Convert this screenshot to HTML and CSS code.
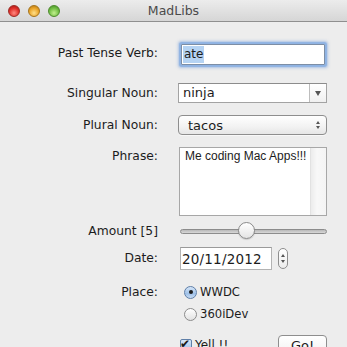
FILE: index.html
```html
<!DOCTYPE html>
<html lang="en">
<head>
    <meta charset="UTF-8">
    <title>MadLibs</title>
    <link rel="stylesheet" href="styles.css">
</head>
<body>
    <div class="window">
        <div class="titlebar">
            <div class="lights">
                <span class="light red"></span>
                <span class="light yellow"></span>
                <span class="light green"></span>
            </div>
            <div class="title">MadLibs</div>
            <div></div>
        </div>

        <div class="form">
            <div class="row row-verb">
                <div class="label">Past Tense Verb:</div>
                <div class="field focused"><span class="selected">ate</span></div>
            </div>

            <div class="row row-singular">
                <div class="label">Singular Noun:</div>
                <div class="combo">
                    <div class="combo-text">ninja</div>
                    <div class="combo-btn"><span class="tri-down"></span></div>
                </div>
            </div>

            <div class="row row-plural">
                <div class="label">Plural Noun:</div>
                <div class="popup">
                    <span>tacos</span>
                    <span class="updown">
                        <span class="tri-up small"></span>
                        <span class="tri-down small"></span>
                    </span>
                </div>
            </div>

            <div class="row row-phrase">
                <div class="label top">Phrase:</div>
                <div class="textview">
                    <div class="textview-text">Me coding Mac Apps!!!</div>
                    <div class="scroll-gutter"></div>
                </div>
            </div>

            <div class="row row-amount">
                <div class="label">Amount [5]</div>
                <div class="slider">
                    <div class="track"></div>
                    <div class="knob"></div>
                </div>
            </div>

            <div class="row row-date">
                <div class="label">Date:</div>
                <div class="date-group">
                    <div class="date-field">20/11/2012</div>
                    <div class="stepper">
                        <span class="tri-up small"></span>
                        <span class="tri-down small"></span>
                    </div>
                </div>
            </div>

            <div class="row row-place">
                <div class="label top">Place:</div>
                <div class="radios">
                    <div class="radio-item"><span class="radio checked"></span>WWDC</div>
                    <div class="radio-item"><span class="radio"></span>360iDev</div>
                </div>
            </div>

            <div class="row row-yell">
                <div></div>
                <div class="bottom-group">
                    <div class="check-item"><span class="checkbox">&#10004;</span>Yell !!</div>
                    <div class="button">Go!</div>
                </div>
            </div>
        </div>
    </div>
</body>
</html>
```

FILE: styles.css
```css
body {
    margin: 0;
    width: 347px;
    height: 347px;
    overflow: hidden;
    background-color: #ededed;
    font-family: 'DejaVu Sans', sans-serif;
    color: #1c1c1c;
}

.window {
    height: 347px;
    overflow: hidden;
}

/* title bar */
.titlebar {
    height: 21px;
    display: grid;
    grid-template-columns: 1fr auto 1fr;
    align-items: center;
    background: linear-gradient(#ececec, #d6d6d6);
    border-bottom: 1px solid #8f8f8f;
}

.lights {
    display: flex;
    gap: 8px;
    padding-left: 8px;
}

.light {
    width: 12px;
    height: 12px;
    border-radius: 50%;
    box-sizing: border-box;
}

.red {
    background: radial-gradient(circle at 50% 70%, #ff8a80, #e0312b 55%, #a01310);
    border: 1px solid #9c2a24;
}

.yellow {
    background: radial-gradient(circle at 50% 70%, #ffe08a, #eaa52a 55%, #b0700d);
    border: 1px solid #a5741c;
}

.green {
    background: radial-gradient(circle at 50% 70%, #c2f08e, #73bf45 55%, #3f8a22);
    border: 1px solid #4d8a2c;
}

.title {
    font-size: 12.5px;
    color: #4a4a4a;
}

/* form layout */
.form {
    padding-top: 19px;
}

.row {
    display: grid;
    grid-template-columns: 158px 149px;
    column-gap: 20px;
    align-items: center;
}

.label {
    text-align: right;
    font-size: 12.3px;
    line-height: 15px;
}

.label.top {
    align-self: start;
}

.row-verb { height: 27px; }
.row-singular { margin-top: 15px; height: 20px; }
.row-plural { margin-top: 12px; height: 20px; }
.row-phrase { margin-top: 12px; height: 69px; }
.row-amount { margin-top: 7px; height: 16px; }
.row-date { margin-top: 8px; height: 23px; }
.row-place { margin-top: 11px; }
.row-yell { margin-top: 10px; }

.row-verb .label { margin-top: -2px; }
.row-phrase .label { padding-top: 2px; }
.row-place .label { line-height: 22px; }

/* text field */
.field {
    margin-left: 3px;
    width: 144px;
    height: 21px;
    box-sizing: border-box;
    background: white;
    border: 1px solid #7d8ea5;
    padding-left: 1px;
    font-size: 12px;
    line-height: 19px;
}

.field.focused {
    box-shadow: 0 0 1px 2px #8fb3e3, 0 0 3px 3px rgba(120, 160, 220, 0.5);
    border-radius: 1px;
}

.selected {
    background-color: #b5d3f3;
    padding: 1px 1px 2px 1px;
}

/* combo box */
.combo {
    display: flex;
    height: 20px;
    box-sizing: border-box;
    border: 1px solid #a3a3a3;
    border-top-color: #8c8c8c;
    background: white;
}

.combo-text {
    flex: 1;
    padding-left: 4px;
    font-size: 13px;
    line-height: 18px;
}

.combo-btn {
    width: 16px;
    border-left: 1px solid #bdbdbd;
    background: linear-gradient(#ffffff, #f0f0f0);
    display: flex;
    align-items: center;
    justify-content: center;
}

.tri-down {
    width: 0;
    height: 0;
    border-left: 3.5px solid transparent;
    border-right: 3.5px solid transparent;
    border-top: 5px solid #555;
}

.tri-up {
    width: 0;
    height: 0;
    border-left: 3.5px solid transparent;
    border-right: 3.5px solid transparent;
    border-bottom: 5px solid #555;
}

.tri-down.small {
    border-left-width: 2.5px;
    border-right-width: 2.5px;
    border-top-width: 3.5px;
}

.tri-up.small {
    border-left-width: 2.5px;
    border-right-width: 2.5px;
    border-bottom-width: 3.5px;
}

/* popup button */
.popup {
    height: 20px;
    box-sizing: border-box;
    border: 1px solid #8e8e8e;
    border-radius: 4px;
    background: linear-gradient(#ffffff, #f2f2f2 60%, #e6e6e6);
    display: flex;
    align-items: center;
    justify-content: space-between;
    padding: 0 6px 0 9px;
    font-size: 13px;
    box-shadow: 0 1px 0 rgba(255, 255, 255, 0.6);
}

.updown {
    display: flex;
    flex-direction: column;
    gap: 2px;
}

/* text view */
.textview {
    margin-left: 1px;
    width: 148px;
    height: 69px;
    box-sizing: border-box;
    border: 1px solid #a7a7a7;
    background: white;
    display: flex;
}

.textview-text {
    flex: 1;
    padding: 1px 0 0 5px;
    font-family: 'Liberation Sans', Arial, sans-serif;
    font-size: 12px;
    line-height: 15px;
}

.scroll-gutter {
    width: 15px;
    background: linear-gradient(90deg, #ececec, #f8f8f8 40%, #f4f4f4);
    border-left: 1px solid #e2e2e2;
}

/* slider */
.slider {
    position: relative;
    margin-left: 2px;
    width: 147px;
    height: 16px;
    display: flex;
    align-items: center;
}

.track {
    width: 100%;
    height: 5px;
    box-sizing: border-box;
    border-radius: 3px;
    border: 1px solid #8c8c8c;
    background: linear-gradient(#b8b8b8, #d8d8d8);
}

.knob {
    position: absolute;
    left: 58px;
    top: -1px;
    width: 17px;
    height: 17px;
    box-sizing: border-box;
    border-radius: 50%;
    border: 1px solid #8a8a8a;
    background: linear-gradient(#ffffff, #e4e4e4);
    box-shadow: 0 1px 1px rgba(0, 0, 0, 0.15);
}

/* date picker */
.date-group {
    display: flex;
    align-items: center;
    margin-left: 2px;
    gap: 6px;
}

.date-field {
    width: 92px;
    height: 23px;
    box-sizing: border-box;
    background: white;
    border: 1px solid #b3b3b3;
    border-top-color: #9a9a9a;
    padding-left: 1px;
    font-size: 13.5px;
    line-height: 22px;
    letter-spacing: 0.2px;
}

.stepper {
    width: 10px;
    height: 21px;
    box-sizing: border-box;
    border: 1px solid #8e8e8e;
    border-radius: 5px;
    background: linear-gradient(#ffffff, #ececec);
    display: flex;
    flex-direction: column;
    align-items: center;
    justify-content: center;
    gap: 3px;
}

/* radios */
.radio-item {
    height: 22px;
    display: flex;
    align-items: center;
    font-size: 11.6px;
}

.radio {
    width: 13px;
    height: 13px;
    box-sizing: border-box;
    border-radius: 50%;
    border: 1px solid #8c8c8c;
    background: linear-gradient(#ffffff, #e2e2e2);
    margin: 0 3px 0 6px;
    display: flex;
    align-items: center;
    justify-content: center;
}

.radio.checked {
    border-color: #5f7fa8;
    background: linear-gradient(#d6e6f8, #9fc1e8 60%, #c8dcf3);
}

.radio.checked::after {
    content: "";
    width: 4px;
    height: 4px;
    border-radius: 50%;
    background: #1d1d1d;
}

/* checkbox and button */
.bottom-group {
    display: flex;
    justify-content: space-between;
    align-items: flex-start;
}

.check-item {
    display: flex;
    align-items: center;
    margin-top: 3px;
    font-size: 12px;
}

.checkbox {
    width: 12px;
    height: 12px;
    box-sizing: border-box;
    margin: 0 3px 0 2px;
    border: 1px solid #5f7fa8;
    border-radius: 2px;
    background: linear-gradient(#d6e6f8, #9fc1e8);
    font-size: 12px;
    line-height: 9px;
    color: #1a1a1a;
    text-indent: -1px;
    overflow: visible;
}

.button {
    width: 49px;
    height: 22px;
    box-sizing: border-box;
    border: 1px solid #8e8e8e;
    border-radius: 4px;
    background: linear-gradient(#ffffff, #f0f0f0);
    text-align: center;
    font-size: 13px;
    line-height: 20px;
}
```
